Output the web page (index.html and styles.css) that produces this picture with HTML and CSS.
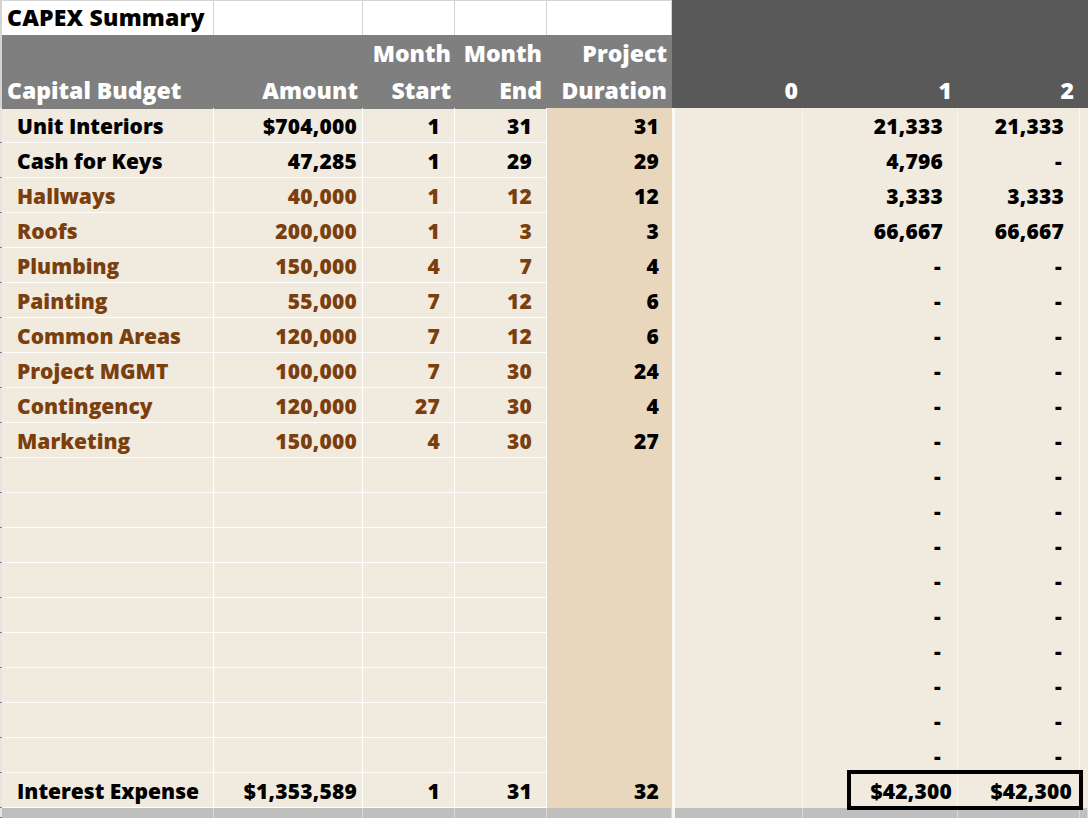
FILE: index.html
```html
<!DOCTYPE html>
<html>
<head>
<meta charset="utf-8">
<link rel="stylesheet" href="styles.css">
</head>
<body>
<div class="sheet">
  <!-- row 1 -->
  <div class="gut g-top"></div>
  <div class="c top title">CAPEX Summary</div>
  <div class="c top"></div>
  <div class="c top"></div>
  <div class="c top"></div>
  <div class="c top"></div>
  <div class="dark">
    <div></div>
    <div class="dh">0</div>
    <div class="dh">1</div>
    <div class="dh">2</div>
    <div></div>
  </div>
  <!-- header -->
  <div class="gut g-head"></div>
  <div class="c hd hl">Capital Budget</div>
  <div class="c hd">Amount</div>
  <div class="c hd">Month<br>Start</div>
  <div class="c hd">Month<br>End</div>
  <div class="c hd">Project<br>Duration</div>

  <!-- data rows -->
  <div class="gut"></div><div class="c a">Unit Interiors</div><div class="c b">$704,000</div><div class="c n">1</div><div class="c n">31</div><div class="c e">31</div><div class="sep"></div><div class="c f"></div><div class="c g">21,333</div><div class="c h">21,333</div><div class="c i"></div>
  <div class="gut"></div><div class="c a">Cash for Keys</div><div class="c b">47,285</div><div class="c n">1</div><div class="c n">29</div><div class="c e">29</div><div class="sep"></div><div class="c f"></div><div class="c g">4,796</div><div class="c h dash">-</div><div class="c i"></div>
  <div class="gut"></div><div class="c a br">Hallways</div><div class="c b br">40,000</div><div class="c n br">1</div><div class="c n br">12</div><div class="c e">12</div><div class="sep"></div><div class="c f"></div><div class="c g">3,333</div><div class="c h">3,333</div><div class="c i"></div>
  <div class="gut"></div><div class="c a br">Roofs</div><div class="c b br">200,000</div><div class="c n br">1</div><div class="c n br">3</div><div class="c e">3</div><div class="sep"></div><div class="c f"></div><div class="c g">66,667</div><div class="c h">66,667</div><div class="c i"></div>
  <div class="gut"></div><div class="c a br">Plumbing</div><div class="c b br">150,000</div><div class="c n br">4</div><div class="c n br">7</div><div class="c e">4</div><div class="sep"></div><div class="c f"></div><div class="c g dash">-</div><div class="c h dash">-</div><div class="c i"></div>
  <div class="gut"></div><div class="c a br">Painting</div><div class="c b br">55,000</div><div class="c n br">7</div><div class="c n br">12</div><div class="c e">6</div><div class="sep"></div><div class="c f"></div><div class="c g dash">-</div><div class="c h dash">-</div><div class="c i"></div>
  <div class="gut"></div><div class="c a br">Common Areas</div><div class="c b br">120,000</div><div class="c n br">7</div><div class="c n br">12</div><div class="c e">6</div><div class="sep"></div><div class="c f"></div><div class="c g dash">-</div><div class="c h dash">-</div><div class="c i"></div>
  <div class="gut"></div><div class="c a br">Project MGMT</div><div class="c b br">100,000</div><div class="c n br">7</div><div class="c n br">30</div><div class="c e">24</div><div class="sep"></div><div class="c f"></div><div class="c g dash">-</div><div class="c h dash">-</div><div class="c i"></div>
  <div class="gut"></div><div class="c a br">Contingency</div><div class="c b br">120,000</div><div class="c n br">27</div><div class="c n br">30</div><div class="c e">4</div><div class="sep"></div><div class="c f"></div><div class="c g dash">-</div><div class="c h dash">-</div><div class="c i"></div>
  <div class="gut"></div><div class="c a br">Marketing</div><div class="c b br">150,000</div><div class="c n br">4</div><div class="c n br">30</div><div class="c e">27</div><div class="sep"></div><div class="c f"></div><div class="c g dash">-</div><div class="c h dash">-</div><div class="c i"></div>

  <!-- empty rows -->
  <div class="gut"></div><div class="c a"></div><div class="c b"></div><div class="c n"></div><div class="c n"></div><div class="c e"></div><div class="sep"></div><div class="c f"></div><div class="c g dash">-</div><div class="c h dash">-</div><div class="c i"></div>
  <div class="gut"></div><div class="c a"></div><div class="c b"></div><div class="c n"></div><div class="c n"></div><div class="c e"></div><div class="sep"></div><div class="c f"></div><div class="c g dash">-</div><div class="c h dash">-</div><div class="c i"></div>
  <div class="gut"></div><div class="c a"></div><div class="c b"></div><div class="c n"></div><div class="c n"></div><div class="c e"></div><div class="sep"></div><div class="c f"></div><div class="c g dash">-</div><div class="c h dash">-</div><div class="c i"></div>
  <div class="gut"></div><div class="c a"></div><div class="c b"></div><div class="c n"></div><div class="c n"></div><div class="c e"></div><div class="sep"></div><div class="c f"></div><div class="c g dash">-</div><div class="c h dash">-</div><div class="c i"></div>
  <div class="gut"></div><div class="c a"></div><div class="c b"></div><div class="c n"></div><div class="c n"></div><div class="c e"></div><div class="sep"></div><div class="c f"></div><div class="c g dash">-</div><div class="c h dash">-</div><div class="c i"></div>
  <div class="gut"></div><div class="c a"></div><div class="c b"></div><div class="c n"></div><div class="c n"></div><div class="c e"></div><div class="sep"></div><div class="c f"></div><div class="c g dash">-</div><div class="c h dash">-</div><div class="c i"></div>
  <div class="gut"></div><div class="c a"></div><div class="c b"></div><div class="c n"></div><div class="c n"></div><div class="c e"></div><div class="sep"></div><div class="c f"></div><div class="c g dash">-</div><div class="c h dash">-</div><div class="c i"></div>
  <div class="gut"></div><div class="c a"></div><div class="c b"></div><div class="c n"></div><div class="c n"></div><div class="c e"></div><div class="sep"></div><div class="c f"></div><div class="c g dash">-</div><div class="c h dash">-</div><div class="c i"></div>
  <div class="gut"></div><div class="c a"></div><div class="c b"></div><div class="c n"></div><div class="c n"></div><div class="c e"></div><div class="sep"></div><div class="c f"></div><div class="c g dash">-</div><div class="c h dash">-</div><div class="c i"></div>

  <!-- interest -->
  <div class="gut"></div><div class="c a">Interest Expense</div><div class="c b">$1,353,589</div><div class="c n">1</div><div class="c n">31</div><div class="c e">32</div><div class="sep"></div><div class="c f"></div><div class="c g cur">$42,300</div><div class="c h cur">$42,300</div><div class="c i"></div>

  <!-- bottom gray row -->
  <div class="gut"></div><div class="c gr"></div><div class="c gr"></div><div class="c gr"></div><div class="c gr"></div><div class="c gr"></div><div class="sep gsep"></div><div class="c gr"></div><div class="c gr"></div><div class="c gr"></div><div class="c gr"></div>

  <div class="box"></div>
</div>
</body>
</html>
```

FILE: styles.css
```css
html, body {
  margin: 0;
  padding: 0;
  background: #bfbfbf;
  overflow: hidden;
}

.sheet {
  position: relative;
  display: grid;
  grid-template-columns: 2px 212px 149px 92px 92px 125px 3px 128px 155px 122px 1fr;
  grid-template-rows: 35px 73px repeat(20, 35px) 10px;
  width: 1088px;
  height: 818px;
  font-family: "Open Sans", "Noto Sans", sans-serif;
  font-weight: 800;
  font-size: 21px;
  color: #000;
  background: #f1eadf;
}

.gut {
  background: #e4e4e4;
  border-bottom: 1px solid #7a7a7a;
  box-sizing: border-box;
}
.g-top { background: #d4d4d4; border-bottom: none; }
.g-head { background: #d4d4d4; border-bottom: none; }

.c {
  box-sizing: border-box;
  display: flex;
  align-items: center;
  justify-content: flex-end;
  white-space: nowrap;
  overflow: hidden;
  line-height: 1;
  padding-top: 2px;
  letter-spacing: 0.2px;
}

/* row 1 */
.top {
  background: #fff;
  border-top: 1px solid #d4d4d4;
  border-right: 1px solid #d4d4d4;
  padding-top: 0;
  padding-bottom: 1px;
}
.title {
  justify-content: flex-start;
  padding-left: 5px;
  font-size: 23px;
}

/* dark header block */
.dark {
  grid-column: 7 / -1;
  grid-row: 1 / 3;
  background: #595959;
  display: grid;
  grid-template-columns: 3px 128px 155px 122px 1fr;
  align-items: end;
  color: #fff;
  font-size: 23px;
}
.dh {
  text-align: right;
  padding-right: 6px;
  line-height: 36px;
}
.dh:nth-child(2) { padding-right: 5px; }

/* gray header */
.hd {
  background: #7f7f7f;
  color: #fff;
  text-align: right;
  align-items: flex-end;
  line-height: 37px;
  padding-right: 5px;
  padding-top: 0;
  padding-bottom: 0;
  margin-bottom: -1px;
  font-size: 23px;
  letter-spacing: 0;
}
.hl {
  justify-content: flex-start;
  padding-left: 5px;
  padding-right: 0;
}
.hd:nth-child(11) { padding-right: 4px; }

/* data columns */
.a {
  justify-content: flex-start;
  padding-left: 15px;
  letter-spacing: 0;
  border-right: 1px solid #fff;
  border-bottom: 1px solid #fff;
}
.b {
  padding-right: 5px;
  border-right: 1px solid #fff;
  border-bottom: 1px solid #fff;
}
.n {
  padding-right: 14px;
  border-right: 1px solid #fff;
  border-bottom: 1px solid #fff;
}
.e {
  background: #e8d7bc;
  padding-right: 13px;
}
.sep { background: #fbf9f5; }
.f { border-right: 1px solid #f9f6f0; }
.g {
  padding-right: 14px;
  border-right: 1px solid #f9f6f0;
}
.h {
  padding-right: 15px;
  border-right: 1px solid #f9f6f0;
}
.dash { padding-right: 16px; }
.h.dash { padding-right: 17px; }
.cur { padding-right: 5px; }
.h.cur { padding-right: 7px; }

.br { color: #7b3f0e; }

/* bottom gray row */
.gr {
  background: #bfbfbf;
  border-right: 1px solid #d9d9d9;
}
.gsep { background: #f4f4f4; }

/* drawn rectangle over totals */
.box {
  position: absolute;
  left: 847px;
  top: 770px;
  width: 236px;
  height: 40px;
  box-sizing: border-box;
  border: 4px solid #000;
  pointer-events: none;
}
```
